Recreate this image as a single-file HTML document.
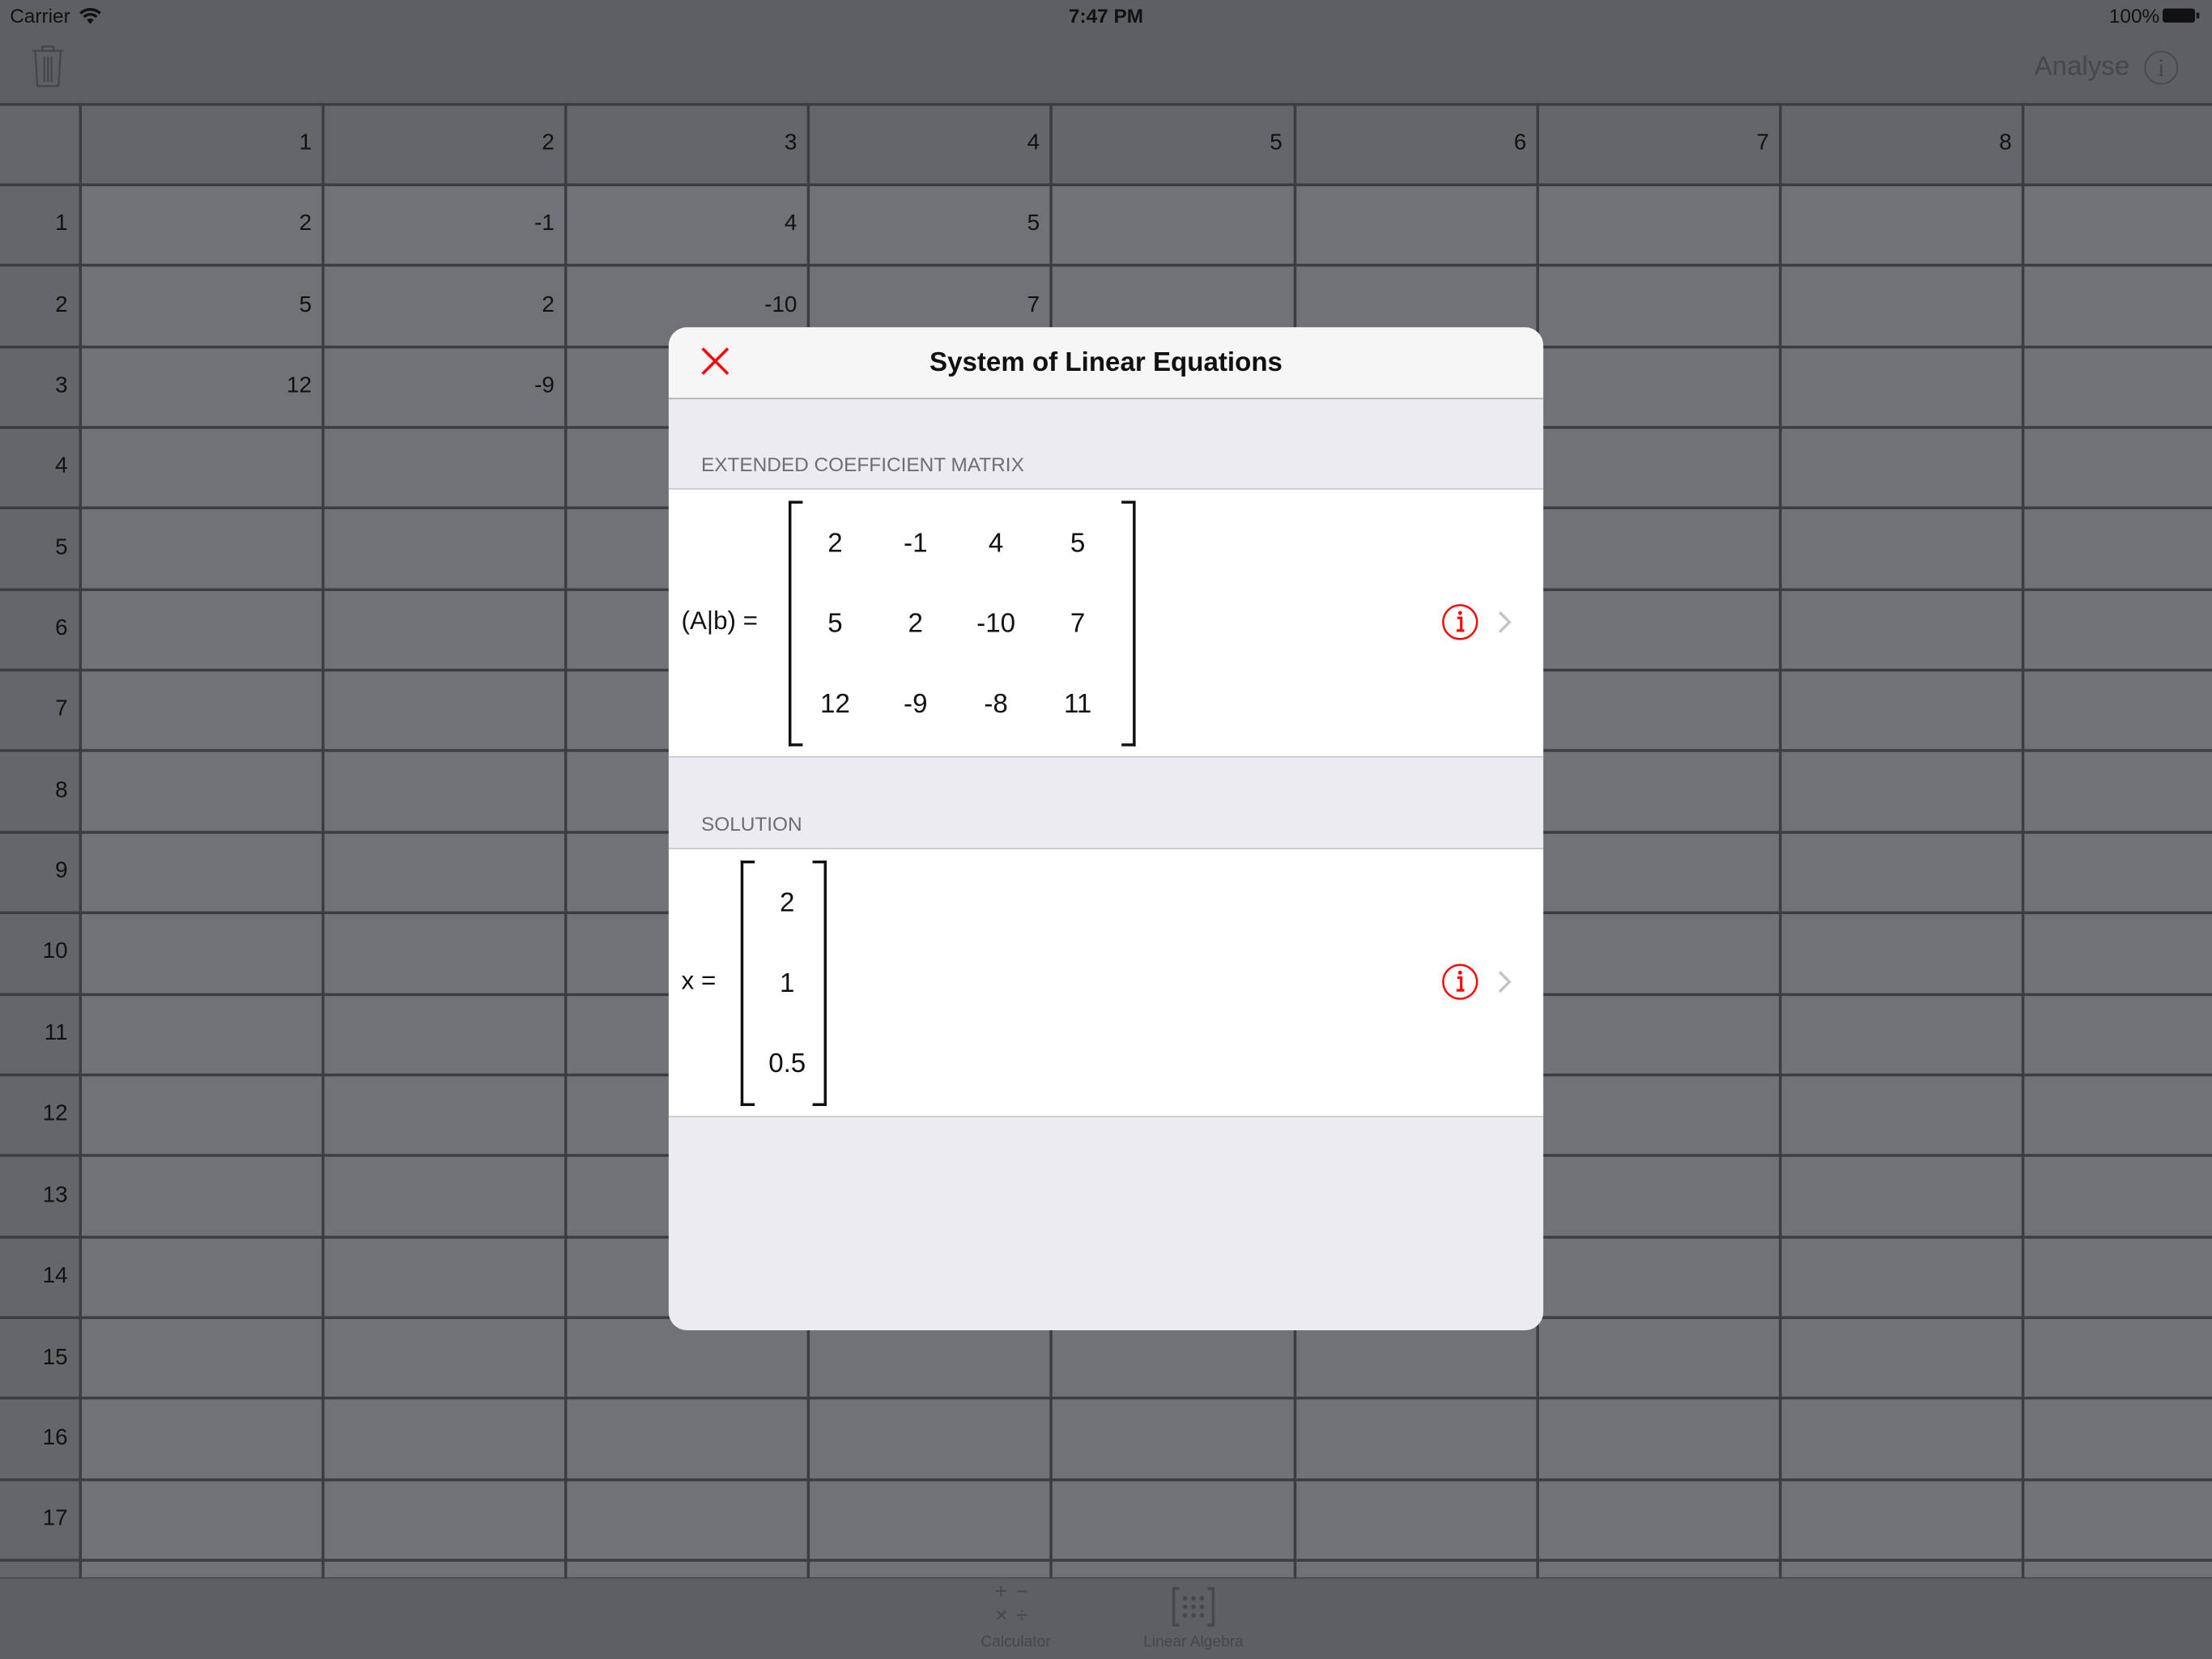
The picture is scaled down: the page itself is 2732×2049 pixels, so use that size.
<!DOCTYPE html>
<html><head><meta charset="utf-8">
<style>
html,body{margin:0;padding:0;width:2732px;height:2048px;overflow:hidden;background:#5e5f63}
#w{position:absolute;left:0;top:0;width:1568px;height:1176px;transform:scale(1.742347);transform-origin:0 0;font-family:"Liberation Sans",sans-serif;color:#111}
.a{position:absolute}
.h{position:absolute;left:0;width:1568px;height:2px;background:#3c3d40}
.v{position:absolute;top:73px;height:1046px;width:2px;background:#3c3d40}
.c{position:absolute;height:57px;line-height:57px;text-align:right;font-size:16px;color:#111}
.m{position:absolute;width:60px;text-align:center;font-size:19px;color:#111;line-height:24px}
</style></head><body><div id="w">
<div class="a" style="left:7px;top:3px;font-size:14px;color:#111">Carrier</div>
<svg class="a" style="left:56px;top:5px" width="16" height="13" viewBox="0 0 16 13"><path d="M1 4.5 A10 10 0 0 1 15 4.5" stroke="#111" stroke-width="2" fill="none"/><path d="M3.5 7 A6.5 6.5 0 0 1 12.5 7" stroke="#111" stroke-width="2" fill="none"/><path d="M5.5 9 L8 12 L10.5 9 A4 4 0 0 0 5.5 9Z" fill="#111"/></svg>
<div class="a" style="left:0;width:1568px;top:3px;text-align:center;font-size:14px;font-weight:bold;color:#111">7:47 PM</div>
<div class="a" style="left:1495px;top:3px;font-size:14px;color:#111">100%</div>
<div class="a" style="left:1533px;top:6px;width:23px;height:10px;border:1px solid #111;border-radius:2px;background:#111;box-sizing:border-box"></div>
<div class="a" style="left:1557px;top:9px;width:2px;height:4px;background:#111"></div>
<svg class="a" style="left:22px;top:32px" width="24" height="30" viewBox="0 0 24 30"><path d="M1 4H23M8 4V1H16V4M3 4.5L4.5 29H19.5L21 4.5M9.5 8V26M12 8V26M14.5 8V26" stroke="#454649" stroke-width="1.3" fill="none"/></svg>
<div class="a" style="left:1442px;top:37px;font-size:19px;color:#46474b">Analyse</div>
<div class="a" style="left:1520px;top:36px;width:22px;height:22px;border:1.3px solid #46474b;border-radius:50%;font-family:'Liberation Serif',serif;font-size:18px;color:#46474b;text-align:center;line-height:22px">i</div>
<div class="a" style="left:0;top:73px;width:1568px;height:57px;background:#65666a"></div>
<div class="a" style="left:57px;top:130px;width:1511px;height:989px;background:#717276"></div>
<div class="a" style="left:0;top:130px;width:57px;height:989px;background:#65666a"></div>
<div class="a" style="left:0;top:1119px;width:1568px;height:57px;background:#5e5f63"></div>
<div class="h" style="top:73px"></div><div class="h" style="top:130px"></div><div class="h" style="top:187px"></div><div class="h" style="top:245px"></div><div class="h" style="top:302px"></div><div class="h" style="top:359px"></div><div class="h" style="top:417px"></div><div class="h" style="top:474px"></div><div class="h" style="top:531px"></div><div class="h" style="top:589px"></div><div class="h" style="top:646px"></div><div class="h" style="top:704px"></div><div class="h" style="top:761px"></div><div class="h" style="top:818px"></div><div class="h" style="top:876px"></div><div class="h" style="top:933px"></div><div class="h" style="top:990px"></div><div class="h" style="top:1048px"></div><div class="h" style="top:1105px"></div>
<div class="a" style="left:0;top:1118px;width:1568px;height:1px;background:#4a4b4e"></div>
<div class="v" style="left:56px"></div><div class="v" style="left:228px"></div><div class="v" style="left:400px"></div><div class="v" style="left:572px"></div><div class="v" style="left:744px"></div><div class="v" style="left:917px"></div><div class="v" style="left:1089px"></div><div class="v" style="left:1261px"></div><div class="v" style="left:1433px"></div>
<div class="c" style="left:57px;width:164px;top:73px">1</div>
<div class="c" style="left:229px;width:164px;top:73px">2</div>
<div class="c" style="left:401px;width:164px;top:73px">3</div>
<div class="c" style="left:573px;width:164px;top:73px">4</div>
<div class="c" style="left:745px;width:164px;top:73px">5</div>
<div class="c" style="left:917px;width:165px;top:73px">6</div>
<div class="c" style="left:1090px;width:164px;top:73px">7</div>
<div class="c" style="left:1262px;width:164px;top:73px">8</div>
<div class="c" style="left:0;width:48px;top:130px">1</div>
<div class="c" style="left:0;width:48px;top:188px">2</div>
<div class="c" style="left:0;width:48px;top:245px">3</div>
<div class="c" style="left:0;width:48px;top:302px">4</div>
<div class="c" style="left:0;width:48px;top:360px">5</div>
<div class="c" style="left:0;width:48px;top:417px">6</div>
<div class="c" style="left:0;width:48px;top:474px">7</div>
<div class="c" style="left:0;width:48px;top:532px">8</div>
<div class="c" style="left:0;width:48px;top:589px">9</div>
<div class="c" style="left:0;width:48px;top:646px">10</div>
<div class="c" style="left:0;width:48px;top:704px">11</div>
<div class="c" style="left:0;width:48px;top:761px">12</div>
<div class="c" style="left:0;width:48px;top:819px">13</div>
<div class="c" style="left:0;width:48px;top:876px">14</div>
<div class="c" style="left:0;width:48px;top:934px">15</div>
<div class="c" style="left:0;width:48px;top:991px">16</div>
<div class="c" style="left:0;width:48px;top:1048px">17</div>
<div class="c" style="left:57px;width:164px;top:130px">2</div>
<div class="c" style="left:229px;width:164px;top:130px">-1</div>
<div class="c" style="left:401px;width:164px;top:130px">4</div>
<div class="c" style="left:573px;width:164px;top:130px">5</div>
<div class="c" style="left:57px;width:164px;top:188px">5</div>
<div class="c" style="left:229px;width:164px;top:188px">2</div>
<div class="c" style="left:401px;width:164px;top:188px">-10</div>
<div class="c" style="left:573px;width:164px;top:188px">7</div>
<div class="c" style="left:57px;width:164px;top:245px">12</div>
<div class="c" style="left:229px;width:164px;top:245px">-9</div>
<div class="a" style="left:700px;top:1120px;width:40px;text-align:center;font-size:15px;color:#46474b;line-height:17px;letter-spacing:6px">+−<br>×÷</div>
<div class="a" style="left:680px;top:1158px;width:80px;text-align:center;font-size:11px;color:#46474b">Calculator</div>
<svg class="a" style="left:831px;top:1125px" width="30" height="28" viewBox="0 0 30 28"><path d="M5 1H1V27H5M25 1H29V27H25" stroke="#46474b" stroke-width="2" fill="none"/><g fill="#46474b"><circle cx="9" cy="8" r="1.6"/><circle cx="15" cy="8" r="1.6"/><circle cx="21" cy="8" r="1.6"/><circle cx="9" cy="14" r="1.6"/><circle cx="15" cy="14" r="1.6"/><circle cx="21" cy="14" r="1.6"/><circle cx="9" cy="20" r="1.6"/><circle cx="15" cy="20" r="1.6"/><circle cx="21" cy="20" r="1.6"/></g></svg>
<div class="a" style="left:796px;top:1158px;width:100px;text-align:center;font-size:11px;color:#46474b">Linear Algebra</div>
<div class="a" style="left:474px;top:232px;width:620px;height:711px;border-radius:13px;overflow:hidden;background:#ebebf0">
 <div class="a" style="left:0;top:0;width:620px;height:50px;background:#f6f6f7;border-bottom:1px solid #b2b2b2"></div>
 <svg class="a" style="left:23px;top:14px" width="20" height="20" viewBox="0 0 20 20"><path d="M1 1L19 19M19 1L1 19" stroke="#ff0000" stroke-width="2" fill="none"/></svg>
 <div class="a" style="left:0;top:15px;width:620px;text-align:center;font-size:19px;font-weight:bold;color:#111">System of Linear Equations</div>
 <div class="a" style="left:23px;top:89px;font-size:14px;color:#6d6d72">EXTENDED COEFFICIENT MATRIX</div>
 <div class="a" style="left:0;top:114px;width:620px;height:189px;background:#fff;border-top:1px solid #c8c7cc;border-bottom:1px solid #c8c7cc"></div>
 <div class="a" style="left:9px;top:198px;font-size:18px">(A|b) =</div>
 <div class="a" style="left:85px;top:123px;width:8px;height:170px;border:2px solid #111;border-right:none"></div>
 <div class="a" style="left:321px;top:123px;width:8px;height:170px;border:2px solid #111;border-left:none"></div>
 <div class="m" style="left:88px;top:142px">2</div><div class="m" style="left:145px;top:142px">-1</div><div class="m" style="left:202px;top:142px">4</div><div class="m" style="left:260px;top:142px">5</div>
 <div class="m" style="left:88px;top:199px">5</div><div class="m" style="left:145px;top:199px">2</div><div class="m" style="left:202px;top:199px">-10</div><div class="m" style="left:260px;top:199px">7</div>
 <div class="m" style="left:88px;top:256px">12</div><div class="m" style="left:145px;top:256px">-9</div><div class="m" style="left:202px;top:256px">-8</div><div class="m" style="left:260px;top:256px">11</div>
 <svg class="a" style="left:547px;top:195px" width="28" height="28" viewBox="0 0 28 28"><circle cx="14" cy="14" r="12" stroke="#ff0000" stroke-width="1.4" fill="none"/><circle cx="14" cy="7.5" r="1.4" fill="#ff0000"/><path d="M12 11H14.8V19.5M11.5 20H17" stroke="#ff0000" stroke-width="1.8" fill="none"/></svg>
 <svg class="a" style="left:587px;top:201px" width="12" height="16" viewBox="0 0 12 16"><path d="M2 1L9 8L2 15" stroke="#c4c4c8" stroke-width="2" fill="none"/></svg>
 <div class="a" style="left:23px;top:344px;font-size:14px;color:#6d6d72">SOLUTION</div>
 <div class="a" style="left:0;top:369px;width:620px;height:189px;background:#fff;border-top:1px solid #c8c7cc;border-bottom:1px solid #c8c7cc"></div>
 <div class="a" style="left:9px;top:453px;font-size:18px">x =</div>
 <div class="a" style="left:51px;top:378px;width:8px;height:170px;border:2px solid #111;border-right:none"></div>
 <div class="a" style="left:102px;top:378px;width:8px;height:170px;border:2px solid #111;border-left:none"></div>
 <div class="m" style="left:54px;top:397px">2</div><div class="m" style="left:54px;top:454px">1</div><div class="m" style="left:54px;top:511px">0.5</div>
 <svg class="a" style="left:547px;top:450px" width="28" height="28" viewBox="0 0 28 28"><circle cx="14" cy="14" r="12" stroke="#ff0000" stroke-width="1.4" fill="none"/><circle cx="14" cy="7.5" r="1.4" fill="#ff0000"/><path d="M12 11H14.8V19.5M11.5 20H17" stroke="#ff0000" stroke-width="1.8" fill="none"/></svg>
 <svg class="a" style="left:587px;top:456px" width="12" height="16" viewBox="0 0 12 16"><path d="M2 1L9 8L2 15" stroke="#c4c4c8" stroke-width="2" fill="none"/></svg>
</div>
</div></body></html>
